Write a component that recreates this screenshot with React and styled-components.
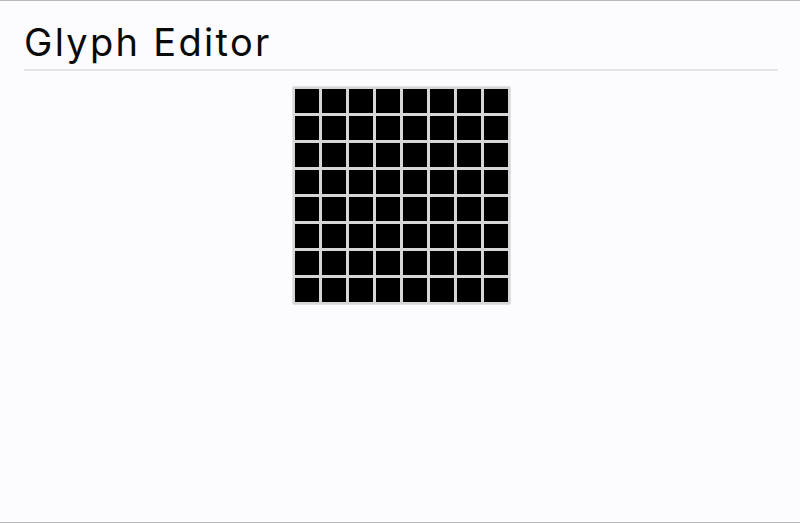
import React from "react";
import styled, { createGlobalStyle } from "styled-components";

const GlobalStyle = createGlobalStyle`
  html, body {
    margin: 0;
    padding: 0;
    background: #fcfbfd;
  }
  * {
    box-sizing: border-box;
  }
`;

const Page = styled.div`
  height: 523px;
  border-top: 1px solid #b8b8bb;
  border-bottom: 1px solid #b8b8bb;
  background: #fcfbfd;
  padding: 0 22px 0 24px;
  font-family: Inter, "Open Sans", sans-serif;
  color: #0a0a0a;
`;

const Header = styled.header`
  border-bottom: 2px solid #e6e4ea;
  padding-top: 19px;
  height: 70px;
`;

const Title = styled.h1`
  margin: 0;
  font-size: 38px;
  font-weight: 400;
  line-height: 44px;
  letter-spacing: 2.3px;
`;

const Board = styled.main`
  display: flex;
  justify-content: center;
  padding-top: 15px;
`;

const Grid = styled.div`
  display: grid;
  grid-template-columns: repeat(${(p) => p.size}, 24px);
  grid-auto-rows: 24px;
  gap: 3px;
  padding: 2px;
  background: #d6d6d8;
  border: 1px solid #e2e1e4;
  border-radius: 2px;
`;

const Cell = styled.div`
  background: ${(p) => (p.on ? "#000" : "#fff")};
`;

const SIZE = 8;

export default function App() {
  const cells = Array.from({ length: SIZE * SIZE }, (_, i) => i);
  return (
    <>
      <GlobalStyle />
      <Page>
        <Header>
          <Title>Glyph Editor</Title>
        </Header>
        <Board>
          <Grid size={SIZE}>
            {cells.map((i) => (
              <Cell key={i} on />
            ))}
          </Grid>
        </Board>
      </Page>
    </>
  );
}
